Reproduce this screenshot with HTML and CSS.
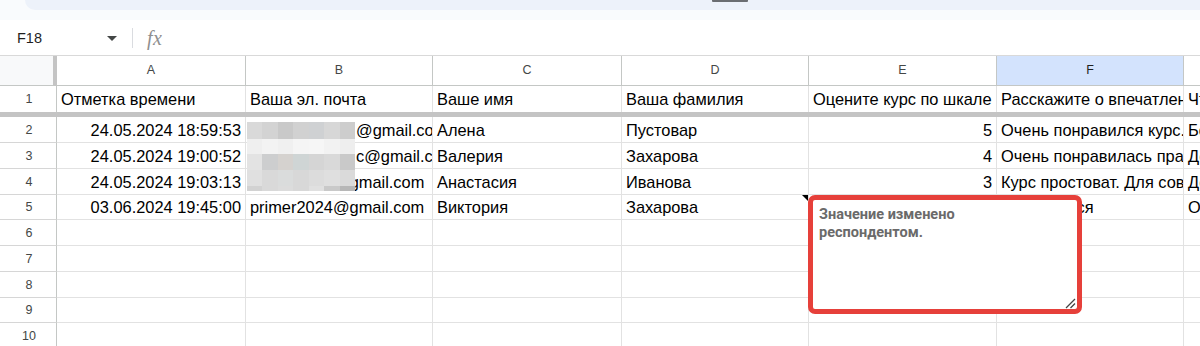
FILE: index.html
```html
<!DOCTYPE html>
<html lang="ru">
<head>
<meta charset="utf-8">
<title>Таблица</title>
<link rel="stylesheet" href="styles.css">
</head>
<body>
<div class="page">
  <div class="topstrip">
    <div class="topstrip-left"></div>
    <div class="topbar"><div class="handle"></div></div>
  </div>
  <div class="substrip"></div>
  <div class="formula">
    <div class="namebox">F18</div>
    <svg class="dd" width="10" height="5" viewBox="0 0 10 5"><path d="M0 0h10L5 5z" fill="#444746"/></svg>
    <div class="divider"></div>
    <span class="fx">fx</span>
  </div>

  <div class="sheet">
    <div class="row head">
      <div class="corner"></div>
      <div class="ch">A</div><div class="ch">B</div><div class="ch">C</div><div class="ch">D</div><div class="ch">E</div><div class="ch sel">F</div><div class="ch last">G</div>
    </div>
    <div class="row r1">
      <div class="rn">1</div>
      <div class="c">Отметка времени</div>
      <div class="c">Ваша эл. почта</div>
      <div class="c">Ваше имя</div>
      <div class="c">Ваша фамилия</div>
      <div class="c">Оцените курс по шкале от 1 до 5</div>
      <div class="c">Расскажите о впечатлениях от курса</div>
      <div class="c">Что бы вы хотели добавить?</div>
    </div>
    <div class="freeze"></div>
    <div class="row">
      <div class="rn">2</div>
      <div class="c num">24.05.2024 18:59:53</div>
      <div class="c"><span class="sp sp2"></span>@gmail.com</div>
      <div class="c">Алена</div>
      <div class="c">Пустовар</div>
      <div class="c num">5</div>
      <div class="c">Очень понравился курс. Спасибо!</div>
      <div class="c">Больше практики</div>
    </div>
    <div class="row">
      <div class="rn">3</div>
      <div class="c num">24.05.2024 19:00:52</div>
      <div class="c"><span class="sp sp3"></span>c@gmail.com</div>
      <div class="c">Валерия</div>
      <div class="c">Захарова</div>
      <div class="c num">4</div>
      <div class="c">Очень понравилась практика</div>
      <div class="c">Добавить примеры</div>
    </div>
    <div class="row">
      <div class="rn">4</div>
      <div class="c num">24.05.2024 19:03:13</div>
      <div class="c"><span class="sp sp4"></span>@gmail.com</div>
      <div class="c">Анастасия</div>
      <div class="c">Иванова</div>
      <div class="c num">3</div>
      <div class="c">Курс простоват. Для совсем новичков</div>
      <div class="c">Добавить задания</div>
    </div>
    <div class="row h25">
      <div class="rn">5</div>
      <div class="c num">03.06.2024 19:45:00</div>
      <div class="c">primer2024@gmail.com</div>
      <div class="c">Виктория</div>
      <div class="c note">Захарова<span class="tri"></span></div>
      <div class="c num"></div>
      <div class="c">Понравился</div>
      <div class="c">Отлично</div>
    </div>
    <div class="row"><div class="rn">6</div><div class="c"></div><div class="c"></div><div class="c"></div><div class="c"></div><div class="c"></div><div class="c"></div><div class="c"></div></div>
    <div class="row"><div class="rn">7</div><div class="c"></div><div class="c"></div><div class="c"></div><div class="c"></div><div class="c"></div><div class="c"></div><div class="c"></div></div>
    <div class="row"><div class="rn">8</div><div class="c"></div><div class="c"></div><div class="c"></div><div class="c"></div><div class="c"></div><div class="c"></div><div class="c"></div></div>
    <div class="row h25"><div class="rn">9</div><div class="c"></div><div class="c"></div><div class="c"></div><div class="c"></div><div class="c"></div><div class="c"></div><div class="c"></div></div>
    <div class="row"><div class="rn">10</div><div class="c"></div><div class="c"></div><div class="c"></div><div class="c"></div><div class="c"></div><div class="c"></div><div class="c"></div></div>
  </div>

  <div class="mosaic">
    <i></i><i></i><i></i><i></i><i></i><i></i><i></i>
    <i></i><i></i><i></i><i></i><i></i><i></i><i></i>
    <i></i><i></i><i></i><i></i><i></i><i></i><i></i>
    <i></i><i></i><i></i><i></i><i></i><i></i><i></i>
    <i></i><i></i><i></i><i></i><i></i><i></i><i></i>
  </div>

  <div class="comment">
    <div class="comment-text">Значение изменено респондентом.</div>
    <svg class="grip" width="11" height="11" viewBox="0 0 11 11"><path d="M1 10L10 1M5.5 10L10 5.5" stroke="#444" stroke-width="1.3" fill="none"/></svg>
  </div>
</div>
</body>
</html>
```

FILE: styles.css
```css
* { box-sizing: border-box; }
html, body { margin: 0; padding: 0; }
body {
  width: 1200px;
  height: 346px;
  overflow: hidden;
  background: #fff;
  font-family: "Liberation Sans", Arial, sans-serif;
}
.page { position: relative; width: 1200px; height: 346px; overflow: hidden; }

.topstrip { display: flex; height: 10px; background: #f9fbfd; }
.topstrip-left { width: 25px; }
.topbar {
  flex: 1;
  background: #edf2fa;
  border-bottom-left-radius: 12px;
  display: flex;
}
.handle {
  margin-left: 687px;
  width: 36px;
  height: 2px;
  background: #6b6e72;
  border-radius: 0 0 1px 1px;
}
.substrip { height: 10px; background: #f9fbfd; }

.formula {
  height: 36px;
  display: flex;
  align-items: center;
  border-bottom: 1px solid #d9d9d9;
  background: #fff;
}
.namebox {
  width: 107px;
  padding-left: 17px;
  font-size: 14.5px;
  color: #1f1f1f;
  padding-top: 1px;
}
.dd { margin-top: 2px; }
.divider {
  width: 1px;
  height: 20px;
  background: #dadce0;
  margin-left: 15px;
}
.fx {
  margin-left: 14px;
  font-family: "Liberation Serif", serif;
  font-style: italic;
  font-size: 20px;
  color: #8f8f8f;
  letter-spacing: 0.5px;
  padding-top: 1px;
}

.sheet { display: flex; flex-direction: column; }
.row {
  display: grid;
  grid-template-columns: 57px 189px 187px 189px 187px 188px 187px 16px;
  height: 26px;
}
.row.h25 { height: 25px; }
.row.head { height: 30px; }

.corner {
  background: #f8f9fa;
  border-right: 4px solid #c4c4c4;
  border-bottom: 1px solid #c4c7c5;
}
.ch {
  display: flex;
  align-items: center;
  justify-content: center;
  font-size: 12.5px;
  color: #444746;
  border-right: 1px solid #c4c7c5;
  border-bottom: 1px solid #c4c7c5;
  background: #fff;
  padding-bottom: 1px;
  overflow: hidden;
  white-space: nowrap;
}
.ch.sel { background: #d3e3fd; color: #1f1f1f; }
.ch.last { justify-content: flex-start; padding-left: 90px; border-right: none; }

.rn {
  display: flex;
  align-items: center;
  justify-content: center;
  font-size: 12.5px;
  color: #444746;
  border-right: 1px solid #c4c7c5;
  border-bottom: 1px solid #d6d6d6;
  padding-left: 2px;
}
.r1 .rn, .r1 .c { border-bottom: none; }

.c {
  display: flex;
  align-items: center;
  white-space: nowrap;
  overflow: hidden;
  font-size: 16.4px;
  color: #000;
  padding: 1px 4px 0 4px;
  border-right: 1px solid #e2e2e2;
  border-bottom: 1px solid #e2e2e2;
}
.c.num { justify-content: flex-end; }
.row .c:last-child { border-right: none; padding-right: 0; }

.freeze { height: 5px; background: #c4c4c4; }

.sp { display: inline-block; flex: none; }
.sp2 { width: 106px; }
.sp3 { width: 106px; }
.sp4 { width: 83px; }

.note { position: relative; overflow: visible; }
.tri {
  position: absolute;
  top: 0;
  right: 0;
  width: 0;
  height: 0;
  border-top: 6px solid #000;
  border-left: 6px solid transparent;
}

.mosaic {
  position: absolute;
  left: 247px;
  top: 122px;
  width: 108px;
  display: grid;
  grid-template-columns: repeat(7, 1fr);
  grid-template-rows: 17px 15px 16px 16px 5px;
}
.mosaic i:nth-child(1) { background: #d9d9d9; }
.mosaic i:nth-child(2) { background: #d3d3d3; }
.mosaic i:nth-child(3) { background: #c9c9c9; }
.mosaic i:nth-child(4) { background: #d1d1d1; }
.mosaic i:nth-child(5) { background: #cfd1d3; }
.mosaic i:nth-child(6) { background: #d7d7d7; }
.mosaic i:nth-child(7) { background: #cdcdcd; }
.mosaic i:nth-child(8) { background: #efefef; }
.mosaic i:nth-child(9) { background: #f3f3f3; }
.mosaic i:nth-child(10) { background: #f0f0f0; }
.mosaic i:nth-child(11) { background: #f5f5f5; }
.mosaic i:nth-child(12) { background: #f6f6f6; }
.mosaic i:nth-child(13) { background: #f2f2f2; }
.mosaic i:nth-child(14) { background: #eeeeee; }
.mosaic i:nth-child(15) { background: #e3e3e3; }
.mosaic i:nth-child(16) { background: #cdcecf; }
.mosaic i:nth-child(17) { background: #d5d2cf; }
.mosaic i:nth-child(18) { background: #cfd5d5; }
.mosaic i:nth-child(19) { background: #d5d5d5; }
.mosaic i:nth-child(20) { background: #d9d9d9; }
.mosaic i:nth-child(21) { background: #c9c9c9; }
.mosaic i:nth-child(22) { background: #e0e0e0; }
.mosaic i:nth-child(23) { background: #d9d9d9; }
.mosaic i:nth-child(24) { background: #dadcdc; }
.mosaic i:nth-child(25) { background: #d8d8d8; }
.mosaic i:nth-child(26) { background: #dcdcdc; }
.mosaic i:nth-child(27) { background: #dfdfdf; }
.mosaic i:nth-child(28) { background: #dadada; }
.mosaic i:nth-child(29) { background: #d2d2d2; }
.mosaic i:nth-child(30) { background: #d9d9d9; }
.mosaic i:nth-child(31) { background: #dcdcdc; }
.mosaic i:nth-child(32) { background: #d8d8d8; }
.mosaic i:nth-child(33) { background: #e0e0e0; }
.mosaic i:nth-child(34) { background: #c9c9c9; }
.mosaic i:nth-child(35) { background: #b7b7b7; }

.comment {
  position: absolute;
  left: 808px;
  top: 195px;
  width: 274px;
  height: 119px;
  background: #fff;
  border: 5px solid #e6403a;
  border-radius: 7px;
  padding: 6px 6px;
}
.comment-text {
  width: 160px;
  font-family: Roboto, "Liberation Sans", sans-serif;
  font-weight: 700;
  font-size: 14.5px;
  line-height: 18px;
  color: #6a6a6a;
}
.grip {
  position: absolute;
  right: 1px;
  bottom: 0px;
}
```
